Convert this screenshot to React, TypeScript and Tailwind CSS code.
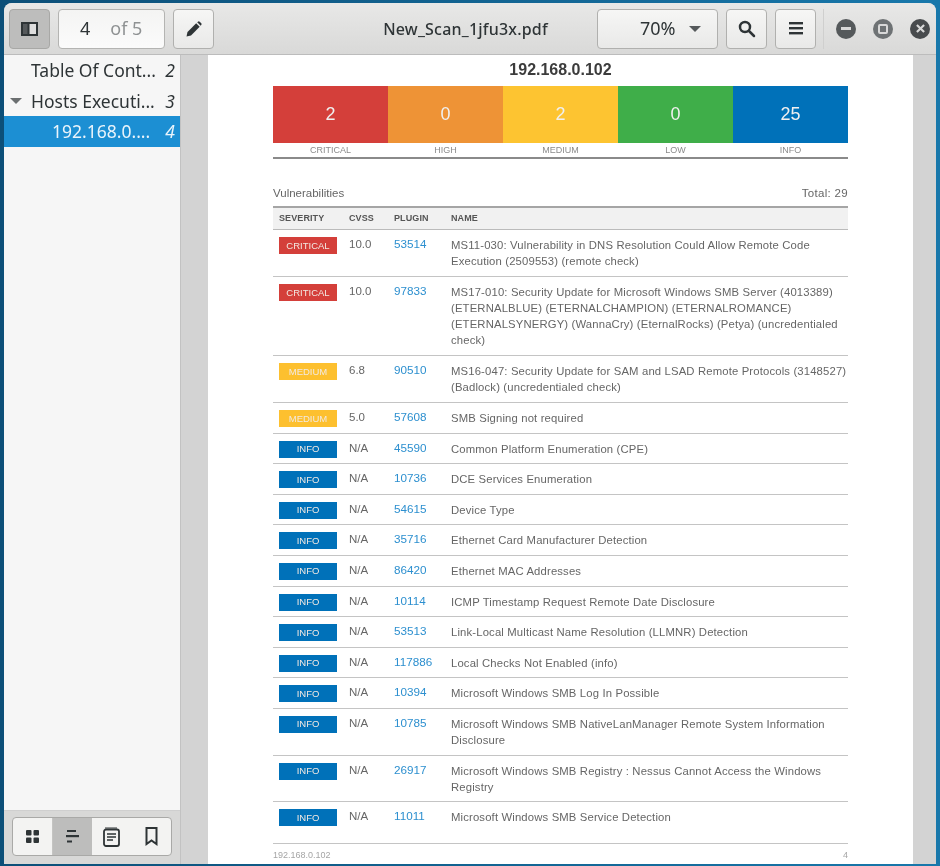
import { ReactNode } from "react";

const rows = [
  { sev: "CRITICAL", cvss: "10.0", plugin: "53514", h: "h-[47px]", name: "MS11-030: Vulnerability in DNS Resolution Could Allow Remote Code Execution (2509553) (remote check)" },
  { sev: "CRITICAL", cvss: "10.0", plugin: "97833", h: "h-[79px]", name: "MS17-010: Security Update for Microsoft Windows SMB Server (4013389) (ETERNALBLUE) (ETERNALCHAMPION) (ETERNALROMANCE) (ETERNALSYNERGY) (WannaCry) (EternalRocks) (Petya) (uncredentialed check)" },
  { sev: "MEDIUM", cvss: "6.8", plugin: "90510", h: "h-[47px]", name: "MS16-047: Security Update for SAM and LSAD Remote Protocols (3148527) (Badlock) (uncredentialed check)" },
  { sev: "MEDIUM", cvss: "5.0", plugin: "57608", h: "h-[30.6px]", name: "SMB Signing not required" },
  { sev: "INFO", cvss: "N/A", plugin: "45590", h: "h-[30.6px]", name: "Common Platform Enumeration (CPE)" },
  { sev: "INFO", cvss: "N/A", plugin: "10736", h: "h-[30.6px]", name: "DCE Services Enumeration" },
  { sev: "INFO", cvss: "N/A", plugin: "54615", h: "h-[30.6px]", name: "Device Type" },
  { sev: "INFO", cvss: "N/A", plugin: "35716", h: "h-[30.6px]", name: "Ethernet Card Manufacturer Detection" },
  { sev: "INFO", cvss: "N/A", plugin: "86420", h: "h-[30.6px]", name: "Ethernet MAC Addresses" },
  { sev: "INFO", cvss: "N/A", plugin: "10114", h: "h-[30.6px]", name: "ICMP Timestamp Request Remote Date Disclosure" },
  { sev: "INFO", cvss: "N/A", plugin: "53513", h: "h-[30.6px]", name: "Link-Local Multicast Name Resolution (LLMNR) Detection" },
  { sev: "INFO", cvss: "N/A", plugin: "117886", h: "h-[30.6px]", name: "Local Checks Not Enabled (info)" },
  { sev: "INFO", cvss: "N/A", plugin: "10394", h: "h-[30.6px]", name: "Microsoft Windows SMB Log In Possible" },
  { sev: "INFO", cvss: "N/A", plugin: "10785", h: "h-[46.7px]", name: "Microsoft Windows SMB NativeLanManager Remote System Information Disclosure" },
  { sev: "INFO", cvss: "N/A", plugin: "26917", h: "h-[46.7px]", name: "Microsoft Windows SMB Registry : Nessus Cannot Access the Windows Registry" },
  { sev: "INFO", cvss: "N/A", plugin: "11011", h: "h-[42px]", name: "Microsoft Windows SMB Service Detection" },
];

const badgeColor: Record<string, string> = {
  CRITICAL: "bg-[#d43f3a]",
  MEDIUM: "bg-[#fdc02f]",
  INFO: "bg-[#0071b9]",
};

const summary = [
  { n: "2", label: "CRITICAL", color: "bg-[#d43f3a]" },
  { n: "0", label: "HIGH", color: "bg-[#ee9336]" },
  { n: "2", label: "MEDIUM", color: "bg-[#fdc431]" },
  { n: "0", label: "LOW", color: "bg-[#3fae49]" },
  { n: "25", label: "INFO", color: "bg-[#0071b9]" },
];

const HeaderButton = ({ children, className = "" }: { children: ReactNode; className?: string }) => (
  <div className={`flex items-center justify-center h-[40px] rounded-[4px] border border-[#b0b0ae] bg-gradient-to-b from-[#f6f6f5] to-[#e9e9e8] text-[#2e3436] ${className}`}>
    {children}
  </div>
);

const WindowDot = ({ children, className }: { children: ReactNode; className: string }) => (
  <div className={`w-[20px] h-[20px] rounded-full flex items-center justify-center ${className}`}>{children}</div>
);

export default function App() {
  return (
    <div className="w-[940px] h-[866px] overflow-hidden bg-gradient-to-r from-[#0c4f78] to-[#1878ab] pt-[3px] pl-[4px] pr-[4px] pb-[2px] font-['Liberation_Sans',sans-serif] blur-[0.5px]">
      <div className="w-[932px] h-[861px] flex flex-col rounded-t-[8px] overflow-hidden bg-[#d3d3d3]">
        {/* title bar */}
        <header className="h-[52px] shrink-0 flex items-center pl-[5px] pr-[6px] bg-gradient-to-b from-[#e8e8e7] to-[#d9d9d8] border-b border-[#bcbcbc] font-['Noto_Sans',sans-serif]">
          <div className="w-[41px] h-[40px] rounded-[4px] border border-[#a8a8a6] bg-[#bdbdbc] flex items-center justify-center">
            <svg width="17" height="14" viewBox="0 0 17 14" fill="none">
              <rect x="1" y="1" width="15" height="12" fill="#dedede" stroke="#2e3436" strokeWidth="2" />
              <rect x="2" y="2" width="5" height="10" fill="#55595b" />
              <rect x="6.5" y="1" width="2" height="12" fill="#2e3436" />
            </svg>
          </div>
          <div className="ml-[8px] w-[107px] h-[40px] rounded-[4px] border border-[#b4b4b2] bg-gradient-to-b from-[#f4f4f3] to-[#fbfbfb] flex items-center text-[18px] pl-[21px]">
            <span className="text-[#2e3436]">4</span>
            <span className="ml-[20px] text-[#8f9293]">of 5</span>
          </div>
          <HeaderButton className="ml-[8px] w-[41px]">
            <svg width="16" height="16" viewBox="0 0 16 16" fill="#2e3436">
              <path d="M0.5 15.5 L1.5 11 L10.2 2.3 L13.7 5.8 L5 14.5 Z" />
              <path d="M11.2 1.3 L12.3 0.5 Q13 0.1 13.7 0.7 L15.3 2.3 Q15.9 3 15.4 3.7 L14.7 4.8 Z" />
            </svg>
          </HeaderButton>
          <div className="flex-1 text-center text-[16px] font-medium text-[#2e3436] pl-[120px] tracking-[0.2px]">New_Scan_1jfu3x.pdf</div>
          <HeaderButton className="w-[121px] text-[18px] justify-start pl-[42px] gap-[13px]">
            <span>70%</span>
            <svg width="12" height="6" viewBox="0 0 12 6" fill="#55595b"><path d="M0 0 H12 L6 6 Z" /></svg>
          </HeaderButton>
          <HeaderButton className="ml-[8px] w-[41px]">
            <svg width="18" height="18" viewBox="0 0 18 18" fill="none" stroke="#2e3436" strokeWidth="2.5" strokeLinecap="round">
              <circle cx="7" cy="7" r="5" />
              <path d="M11 11 L16 16" />
            </svg>
          </HeaderButton>
          <HeaderButton className="ml-[8px] w-[41px]">
            <svg width="14" height="13" viewBox="0 0 14 13" fill="#2e3436">
              <rect width="14" height="2.4" y="0" />
              <rect width="14" height="2.4" y="5" />
              <rect width="14" height="2.4" y="10" />
            </svg>
          </HeaderButton>
          <div className="ml-[7px] mr-[12px] w-px h-[40px] bg-[#cfcfce]" />
          <div className="flex items-center gap-[17px]">
            <WindowDot className="bg-[#55595b]"><div className="w-[10px] h-[3px] bg-[#d8d8d8]" /></WindowDot>
            <WindowDot className="bg-[#6e7274]"><div className="w-[10px] h-[10px] border-2 border-[#d8d8d8] rounded-[2px]" /></WindowDot>
            <WindowDot className="bg-[#484b4d]">
              <svg width="9" height="9" viewBox="0 0 10 10" stroke="#d8d8d8" strokeWidth="2.4"><path d="M1 1 L9 9 M9 1 L1 9" /></svg>
            </WindowDot>
          </div>
        </header>

        <div className="flex-1 flex min-h-0">
          {/* sidebar */}
          <aside className="w-[176px] shrink-0 flex flex-col bg-[#f6f6f6] font-['Noto_Sans',sans-serif] text-[17.5px] text-[#2e3436]">
            <div className="h-[31px] flex items-center pl-[27px] pr-[5px] justify-between">
              <span>Table Of Cont...</span><span className="italic">2</span>
            </div>
            <div className="h-[30px] flex items-center pl-[6px] pr-[5px]">
              <svg width="12" height="6" viewBox="0 0 12 6" fill="#6b6f70"><path d="M0 0 H12 L6 6 Z" /></svg>
              <span className="ml-[9px] flex-1">Hosts Executi...</span><span className="italic">3</span>
            </div>
            <div className="h-[31px] flex items-center pl-[48px] pr-[5px] justify-between bg-[#1c8fd3] text-[#eaf4fb]">
              <span>192.168.0....</span><span className="italic">4</span>
            </div>
            <div className="flex-1" />
            <div className="h-[54px] shrink-0 bg-[#d8d8d7] border-t border-[#cfcfcf] flex items-start pl-[8px] pt-[6px]">
              <div className="w-[160px] h-[39px] flex rounded-[4px] border border-[#a9a9a7] overflow-hidden bg-[#f3f3f2]">
                <div className="w-[40px] flex items-center justify-center border-r border-[#c4c4c2]">
                  <svg width="13" height="13" viewBox="0 0 13 13" fill="#2e3436">
                    <rect width="5.5" height="5.5" rx="1" />
                    <rect x="7.5" width="5.5" height="5.5" rx="1" />
                    <rect y="7.5" width="5.5" height="5.5" rx="1" />
                    <rect x="7.5" y="7.5" width="5.5" height="5.5" rx="1" />
                  </svg>
                </div>
                <div className="w-[40px] flex items-center justify-center bg-[#bdbdbc]">
                  <svg width="13" height="13" viewBox="0 0 13 13" fill="#2e3436">
                    <rect x="1" y="0" width="9" height="2" />
                    <rect x="0" y="5" width="13" height="2.2" />
                    <rect x="1" y="10.5" width="5" height="2" />
                  </svg>
                </div>
                <div className="w-[40px] flex items-center justify-center">
                  <svg width="17" height="20" viewBox="0 0 17 20" fill="none" stroke="#2e3436">
                    <rect x="1" y="2.5" width="15" height="16.5" rx="2" strokeWidth="1.8" />
                    <path d="M3 0 V3 M5 0 V3 M7 0 V3 M9 0 V3 M11 0 V3 M13 0 V3" strokeWidth="1" />
                    <path d="M4 7 H13 M4 10 H13 M4 13 H10" strokeWidth="1.4" />
                  </svg>
                </div>
                <div className="w-[40px] flex items-center justify-center">
                  <svg width="13" height="19" viewBox="0 0 13 19" fill="none" stroke="#2e3436" strokeWidth="2">
                    <path d="M1.5 1 H11.5 V17 L6.5 13.5 L1.5 17 Z" />
                  </svg>
                </div>
              </div>
            </div>
          </aside>

          {/* pdf page */}
          <main className="flex-1 min-w-0 bg-[#d3d3d3] border-l border-[#c2c2c2] pl-[27px] pr-[23px]">
            <div className="h-full bg-white pl-[65px] pr-[65px] flex flex-col">
              <div className="h-[31px] pt-[5px] text-center text-[16px] leading-[19px] font-bold text-[#3c3c3c]">192.168.0.102</div>
              <div className="flex h-[57px]">
                {summary.map((s) => (
                  <div key={s.label} className={`flex-1 flex items-center justify-center text-[18px] text-[#f0f0f0] ${s.color}`}>{s.n}</div>
                ))}
              </div>
              <div className="flex h-[14px] border-b-2 border-[#8a8a8a] box-content">
                {summary.map((s) => (
                  <div key={s.label} className="flex-1 text-center text-[9px] leading-[14px] text-[#8b8b8b]">{s.label}</div>
                ))}
              </div>
              <div className="mt-[26px] flex justify-between text-[11.5px] leading-[16px] text-[#666666]">
                <span>Vulnerabilities</span>
                <span className="tracking-[0.3px]">Total: 29</span>
              </div>
              <div className="mt-[5px] flex h-[24px] items-center bg-[#f1f1f1] border-t-2 border-b border-t-[#a5a5a5] border-b-[#bbbbbb] text-[9px] font-bold text-[#555555] tracking-[0.1px]">
                <span className="w-[76px] pl-[6px]">SEVERITY</span>
                <span className="w-[45px]">CVSS</span>
                <span className="w-[57px]">PLUGIN</span>
                <span>NAME</span>
              </div>
              {rows.map((r) => (
                <div key={r.plugin} className={`flex shrink-0 pt-[7px] border-b border-[#c4c4c4] text-[11.3px] leading-[16px] text-[#666666] ${r.h}`}>
                  <div className="w-[76px] pl-[6px] shrink-0">
                    <div className={`w-[58px] h-[17px] flex items-center justify-center text-[9.5px] text-[#f2e9e2] ${badgeColor[r.sev]}`}>{r.sev}</div>
                  </div>
                  <div className="w-[45px] shrink-0 text-[11.5px] -mt-[1px]">{r.cvss}</div>
                  <div className="w-[57px] shrink-0 text-[11.7px] -mt-[1px] text-[#2c8fcf]">{r.plugin}</div>
                  <div className="flex-1 tracking-[0.15px]">{r.name}</div>
                </div>
              ))}
              <div className="flex justify-between text-[9px] leading-[12px] pt-[5px] text-[#a5a5a5]">
                <span>192.168.0.102</span>
                <span>4</span>
              </div>
            </div>
          </main>
        </div>
      </div>
    </div>
  );
}
